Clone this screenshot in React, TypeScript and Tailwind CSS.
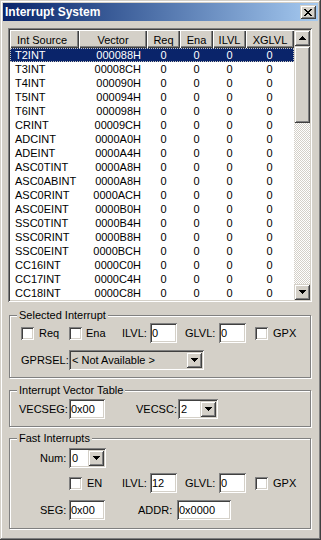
import React from 'react';

const sunken =
  'shadow-[inset_1px_1px_0_#808080,inset_-1px_-1px_0_#fff,inset_2px_2px_0_#404040,inset_-2px_-2px_0_#d4d0c8]';
const raised =
  'shadow-[inset_1px_1px_0_#d4d0c8,inset_-1px_-1px_0_#404040,inset_2px_2px_0_#fff,inset_-2px_-2px_0_#808080]';
const headerRaised = 'shadow-[inset_1px_1px_0_#fff,inset_-1px_-1px_0_#404040,inset_-2px_-2px_0_#808080]';

const rows: [string, string][] = [
  ['T2INT', '000088H'],
  ['T3INT', '00008CH'],
  ['T4INT', '000090H'],
  ['T5INT', '000094H'],
  ['T6INT', '000098H'],
  ['CRINT', '00009CH'],
  ['ADCINT', '0000A0H'],
  ['ADEINT', '0000A4H'],
  ['ASC0TINT', '0000A8H'],
  ['ASC0ABINT', '0000A8H'],
  ['ASC0RINT', '0000ACH'],
  ['ASC0EINT', '0000B0H'],
  ['SSC0TINT', '0000B4H'],
  ['SSC0RINT', '0000B8H'],
  ['SSC0EINT', '0000BCH'],
  ['CC16INT', '0000C0H'],
  ['CC17INT', '0000C4H'],
  ['CC18INT', '0000C8H'],
];

function ArrowDown() {
  return (
    <svg width="7" height="4" viewBox="0 0 7 4" shapeRendering="crispEdges">
      <path d="M0 0h7v1H0zM1 1h5v1H1zM2 2h3v1H2zM3 3h1v1H3z" fill="#000" />
    </svg>
  );
}

function ArrowUp() {
  return (
    <svg width="7" height="4" viewBox="0 0 7 4" shapeRendering="crispEdges">
      <path d="M3 0h1v1H3zM2 1h3v1H2zM1 2h5v1H1zM0 3h7v1H0z" fill="#000" />
    </svg>
  );
}

function Check() {
  return <div className={`w-[13px] h-[13px] shrink-0 bg-white ${sunken}`} />;
}

function Edit({ w, value }: { w: string; value: string }) {
  return (
    <div className={`${w} h-[20px] shrink-0 bg-white pl-[2px] leading-[20px] ${sunken}`}>{value}</div>
  );
}

function Combo({ w, value, bg }: { w: string; value: string; bg: string }) {
  return (
    <div className={`${w} h-[20px] shrink-0 p-[2px] flex ${bg} ${sunken}`}>
      <span className="flex-1 pl-[1px] leading-[16px] whitespace-nowrap overflow-hidden">{value}</span>
      <div className={`w-[16px] h-[16px] bg-[#d4d0c8] flex items-center justify-center ${raised}`}>
        <ArrowDown />
      </div>
    </div>
  );
}

function Group({ title, className, children }: { title: string; className: string; children: React.ReactNode }) {
  return (
    <div
      className={`relative ml-[6px] w-[302px] border border-[#808080] shadow-[inset_1px_1px_0_#fff,1px_1px_0_#fff] ${className}`}
    >
      <span className="absolute left-[7px] -top-[8px] px-[2px] bg-[#d4d0c8] leading-[14px]">{title}</span>
      {children}
    </div>
  );
}

export default function App() {
  return (
    <div
      className={`w-[321px] h-[540px] bg-[#d4d0c8] p-[3px] flex flex-col overflow-hidden text-[11px] text-black font-[Liberation_Sans,Arial,sans-serif] shadow-[inset_-1px_-1px_0_#404040,inset_1px_1px_0_#d4d0c8,inset_-2px_-2px_0_#808080,inset_2px_2px_0_#fff]`}
    >
      {/* title bar */}
      <div className="h-[18px] flex items-center justify-between bg-gradient-to-r from-[#0a246a] to-[#a6caf0]">
        <span className="pl-[2px] text-[12px] font-bold text-white leading-none">Interrupt System</span>
        <div className={`w-[16px] h-[14px] mr-[2px] bg-[#d4d0c8] flex items-center justify-center ${raised}`}>
          <svg width="8" height="7" viewBox="0 0 8 7" shapeRendering="crispEdges">
            <path
              d="M0 0h2v1H0zM6 0h2v1H6zM1 1h2v1H1zM5 1h2v1H5zM2 2h4v1H2zM3 3h2v1H3zM2 4h4v1H2zM1 5h2v1H1zM5 5h2v1H5zM0 6h2v1H0zM6 6h2v1H6z"
              fill="#000"
            />
          </svg>
        </div>
      </div>

      {/* list view */}
      <div className={`mt-[7px] ml-[5px] w-[304px] h-[274px] p-[2px] bg-white flex ${sunken}`}>
        <div className="w-[284px] flex flex-col">
          <div className="h-[18px] flex bg-[#d4d0c8] leading-[18px]">
            <div className={`w-[69px] pl-[7px] pt-[1px] ${headerRaised}`}>Int Source</div>
            <div className={`w-[68px] text-center pt-[1px] ${headerRaised}`}>Vector</div>
            <div className={`w-[33px] text-center pt-[1px] ${headerRaised}`}>Req</div>
            <div className={`w-[33px] text-center pt-[1px] ${headerRaised}`}>Ena</div>
            <div className={`w-[33px] text-center pt-[1px] ${headerRaised}`}>ILVL</div>
            <div className={`w-[48px] text-center pt-[1px] ${headerRaised}`}>XGLVL</div>
          </div>
          {rows.map(([src, vec], i) => (
            <div
              key={src + i}
              className={`h-[14px] leading-[12px] flex ${
                i === 0
                  ? 'bg-[#0a246a] text-white border border-dotted border-[#c8c4bc]'
                  : 'border border-transparent'
              }`}
            >
              <div className="w-[68px] pl-[4px]">{src}</div>
              <div className="w-[68px] pr-[6px] text-right">{vec}</div>
              <div className="w-[33px] text-center">0</div>
              <div className="w-[33px] text-center">0</div>
              <div className="w-[33px] text-center">0</div>
              <div className="w-[47px] text-center">0</div>
            </div>
          ))}
        </div>
        <div className="w-[16px] flex flex-col">
          <div className={`h-[16px] bg-[#d4d0c8] flex items-center justify-center ${raised}`}>
            <ArrowUp />
          </div>
          <div className={`h-[77px] bg-[#d4d0c8] ${raised}`} />
          <div className="flex-1 bg-[image:repeating-conic-gradient(#d4d0c8_0_25%,#fff_0_50%)] bg-[length:2px_2px]" />
          <div className={`h-[16px] bg-[#d4d0c8] flex items-center justify-center ${raised}`}>
            <ArrowDown />
          </div>
        </div>
      </div>

      {/* Selected Interrupt */}
      <Group title="Selected Interrupt" className="mt-[13px] h-[63px] pt-[7px]">
        <div className="flex items-center h-[20px] pl-[11px]">
          <Check />
          <span className="w-[35px] pl-[5px]">Req</span>
          <Check />
          <span className="w-[40px] pl-[4px]">Ena</span>
          <span className="w-[28px]">ILVL:</span>
          <Edit w="w-[27px]" value="0" />
          <span className="w-[42px] pl-[8px]">GLVL:</span>
          <Edit w="w-[27px]" value="0" />
          <span className="w-[9px]" />
          <Check />
          <span className="pl-[5px]">GPX</span>
        </div>
        <div className="flex items-center h-[20px] mt-[7px] pl-[11px]">
          <span className="w-[48px]">GPRSEL:</span>
          <Combo w="w-[135px]" value="< Not Available >" bg="bg-[#d4d0c8]" />
        </div>
      </Group>

      {/* Interrupt Vector Table */}
      <Group title="Interrupt Vector Table" className="mt-[12px] h-[37px] pt-[8px]">
        <div className="flex items-center h-[20px] pl-[9px]">
          <span className="w-[50px]">VECSEG:</span>
          <Edit w="w-[36px]" value="0x00" />
          <span className="w-[73px] pl-[31px]">VECSC:</span>
          <Combo w="w-[40px]" value="2" bg="bg-white" />
        </div>
      </Group>

      {/* Fast Interrupts */}
      <Group title="Fast Interrupts" className="mt-[11px] h-[91px] pt-[9px]">
        <div className="flex items-center h-[20px] pl-[30px]">
          <span className="w-[29px]">Num:</span>
          <Combo w="w-[37px]" value="0" bg="bg-white" />
        </div>
        <div className="flex items-center h-[20px] mt-[5px] pl-[59px]">
          <Check />
          <span className="w-[40px] pl-[5px]">EN</span>
          <span className="w-[28px]">ILVL:</span>
          <Edit w="w-[27px]" value="12" />
          <span className="w-[42px] pl-[8px]">GLVL:</span>
          <Edit w="w-[27px]" value="0" />
          <span className="w-[9px]" />
          <Check />
          <span className="pl-[5px]">GPX</span>
        </div>
        <div className="flex items-center h-[20px] mt-[7px] pl-[30px]">
          <span className="w-[29px]">SEG:</span>
          <Edit w="w-[36px]" value="0x00" />
          <span className="w-[72px] pl-[33px]">ADDR:</span>
          <Edit w="w-[54px]" value="0x0000" />
        </div>
      </Group>
    </div>
  );
}
